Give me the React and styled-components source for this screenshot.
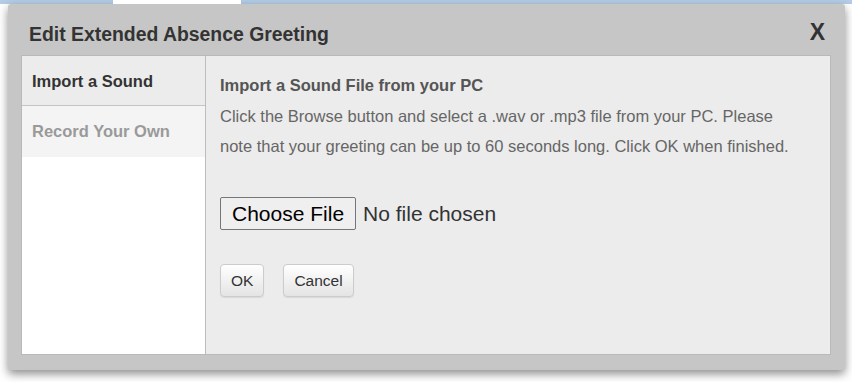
import React from "react";
import styled, { createGlobalStyle } from "styled-components";

const Global = createGlobalStyle`
  html, body { margin: 0; padding: 0; background: #ffffff; }
  body { font-family: "Liberation Sans", Arial, sans-serif; width: 852px; height: 382px; overflow: hidden; }
`;

const TopStrip = styled.div`
  height: 4px;
  display: flex;
  background: #b3cde6;
`;

const StripTab = styled.div`
  margin-left: 113px;
  width: 128px;
  background: #ffffff;
`;

const Dialog = styled.div`
  margin-left: 8px;
  width: 837px;
  height: 366px;
  background: #c6c6c6;
  border-radius: 3px;
  box-shadow: 0 4px 10px rgba(0, 0, 0, 0.45);
  display: flex;
  flex-direction: column;
  box-sizing: border-box;
  padding: 0 14px 15px 13px;
`;

const Header = styled.div`
  height: 51px;
  display: flex;
  align-items: center;
  justify-content: space-between;
  padding: 0 6px 0 8px;
`;

const Title = styled.h2`
  margin: 0;
  font-size: 19.4px;
  font-weight: bold;
  color: #333333;
  padding-top: 9px;
`;

const Close = styled.span`
  font-size: 23px;
  font-weight: bold;
  color: #333333;
  padding-top: 5px;
  cursor: pointer;
`;

const Panel = styled.div`
  flex: 1;
  display: flex;
  border: 1px solid #b9b9b9;
  background: #ececec;
`;

const Sidebar = styled.div`
  width: 183px;
  background: #ffffff;
  border-right: 1px solid #bdbdbd;
  display: flex;
  flex-direction: column;
`;

const Tab = styled.div`
  height: ${(p) => (p.$active ? "50px" : "51px")};
  display: flex;
  align-items: center;
  padding-left: 10px;
  font-size: 16.5px;
  font-weight: bold;
  color: ${(p) => (p.$active ? "#333333" : "#9a9a9a")};
  background: ${(p) => (p.$active ? "#ececec" : "#f4f4f4")};
  border-bottom: ${(p) => (p.$active ? "1px solid #c4c4c4" : "none")};
  padding-top: ${(p) => (p.$active ? "1px" : "0")};
  box-sizing: border-box;
`;

const Content = styled.div`
  flex: 1;
  padding: 19px 36px 0 14px;
`;

const Heading = styled.h3`
  margin: 0;
  font-size: 16.5px;
  font-weight: bold;
  color: #555555;
  line-height: 20px;
`;

const Paragraph = styled.p`
  margin: 6px 0 0;
  font-size: 16.5px;
  color: #666666;
  line-height: 30px;
  max-width: 580px;
`;

const FileRow = styled.div`
  margin-top: 36px;
  display: flex;
  align-items: center;
  gap: 7px;
`;

const ChooseButton = styled.button`
  font-family: "Liberation Sans", Arial, sans-serif;
  font-size: 21px;
  color: #000000;
  height: 33px;
  padding: 0 11px;
  background: #efefef;
  border: 1px solid #767676;
  border-radius: 2px;
`;

const FileName = styled.span`
  font-size: 21px;
  color: #333333;
`;

const Actions = styled.div`
  margin-top: 34px;
  display: flex;
  gap: 19px;
`;

const ActionButton = styled.button`
  font-family: "Liberation Sans", Arial, sans-serif;
  font-size: 15.5px;
  color: #333333;
  height: 33px;
  padding: 0 10px;
  background: linear-gradient(#ffffff, #e4e4e4);
  border: 1px solid #cccccc;
  border-radius: 4px;
  box-shadow: 0 1px 1px rgba(0, 0, 0, 0.08);
`;

export default function App() {
  return (
    <>
      <Global />
      <TopStrip>
        <StripTab />
      </TopStrip>
      <Dialog>
        <Header>
          <Title>Edit Extended Absence Greeting</Title>
          <Close>X</Close>
        </Header>
        <Panel>
          <Sidebar>
            <Tab $active>Import a Sound</Tab>
            <Tab>Record Your Own</Tab>
          </Sidebar>
          <Content>
            <Heading>Import a Sound File from your PC</Heading>
            <Paragraph>
              Click the Browse button and select a .wav or .mp3 file from your PC. Please note
              that your greeting can be up to 60 seconds long. Click OK when finished.
            </Paragraph>
            <FileRow>
              <ChooseButton>Choose File</ChooseButton>
              <FileName>No file chosen</FileName>
            </FileRow>
            <Actions>
              <ActionButton>OK</ActionButton>
              <ActionButton>Cancel</ActionButton>
            </Actions>
          </Content>
        </Panel>
      </Dialog>
    </>
  );
}
